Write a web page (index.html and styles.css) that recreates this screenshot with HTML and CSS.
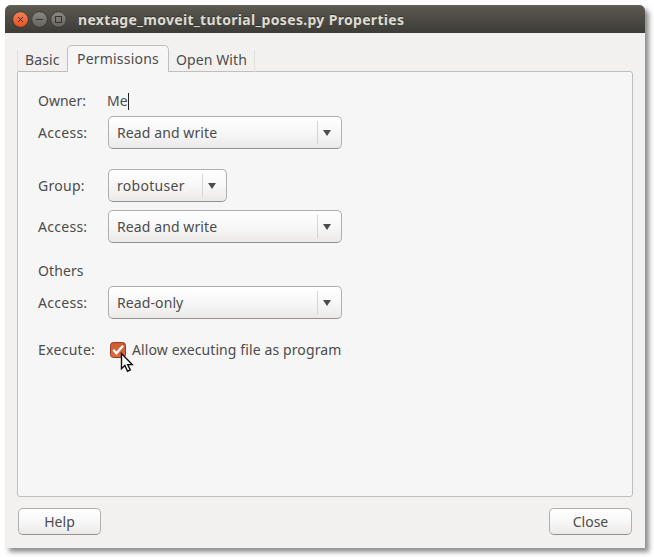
FILE: index.html
```html
<!DOCTYPE html>
<html lang="en">
<head>
<meta charset="utf-8">
<title>nextage_moveit_tutorial_poses.py Properties</title>
<link rel="stylesheet" href="styles.css">
</head>
<body>
<div class="window">
  <header class="titlebar">
    <svg class="controls" width="58" height="18" viewBox="0 0 58 18">
      <defs>
        <linearGradient id="orange" x1="0" y1="0" x2="0" y2="1"><stop offset="0" stop-color="#f4805a"/><stop offset="1" stop-color="#e9521f"/></linearGradient>
        <linearGradient id="grey" x1="0" y1="0" x2="0" y2="1"><stop offset="0" stop-color="#8b8982"/><stop offset="1" stop-color="#65635d"/></linearGradient>
      </defs>
      <g stroke="#34332e" stroke-width=".8">
        <circle cx="8.5" cy="8.5" r="7.8" fill="url(#orange)"/>
        <circle cx="27.5" cy="8.5" r="7.8" fill="url(#grey)"/>
        <circle cx="46.5" cy="8.5" r="7.8" fill="url(#grey)"/>
      </g>
      <g fill="none" stroke="#3c3229">
        <path d="M6 6l5 5M11 6l-5 5M24 8.5h7"/>
        <rect x="43.5" y="5.5" width="6" height="6"/>
      </g>
    </svg>
    <span class="title">nextage_moveit_tutorial_poses.py Properties</span>
  </header>
  <main class="content">
    <nav class="tabs">
      <div class="tab first">Basic</div>
      <div class="tab active">Permissions</div>
      <div class="tab last">Open With</div>
    </nav>
    <section class="panel">
      <div class="row owner"><span class="label">Owner:</span><span class="value">Me</span><i class="caret"></i></div>
      <div class="row"><span class="label">Access:</span><div class="combo"><span>Read and write</span><i class="drop"></i></div></div>
      <div class="row group"><span class="label">Group:</span><div class="combo small"><span>robotuser</span><i class="drop"></i></div></div>
      <div class="row group-access"><span class="label">Access:</span><div class="combo"><span>Read and write</span><i class="drop"></i></div></div>
      <div class="row others"><span class="label">Others</span></div>
      <div class="row"><span class="label">Access:</span><div class="combo"><span>Read-only</span><i class="drop"></i></div></div>
      <div class="row execute"><span class="label">Execute:</span>
        <div class="check">
          <svg width="16" height="16" viewBox="0 0 16 16"><defs><linearGradient id="box" x1="0" y1="0" x2="0" y2="1"><stop offset="0" stop-color="#cc5a31"/><stop offset="1" stop-color="#e06c40"/></linearGradient></defs><rect x=".5" y=".5" width="15" height="15" rx="3" fill="url(#box)" stroke="#983d1d"/><path d="M3.3 7.7l3.1 3.5L13 3.8" fill="none" stroke="#fff" stroke-width="2.3"/></svg>
          <svg class="pointer" width="14" height="22" viewBox="0 0 14 22"><path d="M1.5 1.5v15.2l3.4-3.2 2.6 5.7 2.8-1.3-2.6-5.3h4.5z" fill="#fff" stroke="#111" stroke-width="1.4"/></svg>
        </div>
        <span class="allow">Allow executing file as program</span>
      </div>
    </section>
    <footer class="actions"><button>Help</button><button>Close</button></footer>
  </main>
</div>
</body>
</html>
```
FILE: styles.css
```css
* { box-sizing: border-box; }
body {
  margin: 0;
  padding: 5px;
  height: 557px;
  overflow: hidden;
  background: #fff;
  color: #4c4c4c;
  font: 14px/20px "Noto Sans", sans-serif;
  white-space: nowrap;
}
.window {
  width: 640px;
  height: 543px;
  background: #f2f1f0;
  border-radius: 6px 6px 0 0;
  box-shadow: 4px 4px 5px rgba(0, 0, 0, .45);
}
.titlebar {
  display: flex;
  align-items: center;
  height: 28px;
  padding-left: 7px;
  border-radius: 6px 6px 0 0;
  background: linear-gradient(#5c5a50, #3c3b37);
  box-shadow: inset 0 1px #65635a;
}
.controls { margin-top: 2px; }
.title {
  margin: 1px 0 0 8px;
  color: #dfdbd2;
  font-weight: 700;
  letter-spacing: .32px;
  text-shadow: 0 -1px #33322e;
}
.content { padding: 12px; }
.tabs { display: flex; align-items: flex-end; height: 27px; margin-bottom: -1px; }
.tab { height: 22px; border: 0 solid #e3e1de; letter-spacing: .1px; }
.first { width: 50px; border-left-width: 1px; padding-left: 7px; }
.active {
  width: 102px;
  height: 27px;
  padding: 3px 0 0 9px;
  border: 1px solid #c0bfbd;
  border-bottom: 0;
  border-radius: 5px 5px 0 0;
  background: #f6f6f6;
  letter-spacing: .2px;
  position: relative;
}
.last { width: 86px; padding-left: 7px; border-right-width: 1px; }
.panel {
  width: 616px;
  height: 426px;
  padding: 16px 0 0 20px;
  border: 1px solid #c0bfbd;
  border-radius: 0 3px 3px 3px;
  background: #f6f6f6;
}
.row { display: flex; align-items: center; height: 33px; }
.label { width: 70px; letter-spacing: .28px; }
.owner { height: 28px; padding-bottom: 2px; }
.owner .label { letter-spacing: 0; }
.owner .value { margin-left: -1px; }
.caret { width: 1px; height: 17px; background: #222; }
.group { margin-top: 20px; }
.group-access { margin-top: 8px; }
.others { height: 28px; margin-top: 15px; padding-bottom: 2px; }
.others .label { letter-spacing: .1px; }
.execute { margin-top: 15px; padding-bottom: 1px; }
.combo, button {
  display: flex;
  align-items: center;
  border: 1px solid #b0afad;
  border-bottom-color: #929190;
  border-radius: 5px;
  background: linear-gradient(#fff, #f8f7f7 50%, #ebeae9);
}
.combo { width: 234px; height: 33px; padding-left: 8px; justify-content: space-between; letter-spacing: .1px; }
.small { width: 119px; letter-spacing: .3px; }
.drop { display: flex; align-items: center; width: 24px; height: 23px; padding-left: 5px; border-left: 1px solid #d6d5d3; }
.drop::after { content: ""; margin-top: 1px; border: 4px solid transparent; border-top: 6px solid #4c4c4c; border-bottom: 0; }
.check { position: relative; width: 16px; height: 16px; margin: 0 6px 0 2px; }
.check svg { display: block; }
.check .pointer { position: absolute; left: 10px; top: 10px; }
.allow { letter-spacing: .11px; }
.actions { display: flex; justify-content: space-between; margin: 11px 1px 0; }
button { justify-content: center; width: 83px; height: 27px; padding: 0; font: inherit; color: inherit; }
```
